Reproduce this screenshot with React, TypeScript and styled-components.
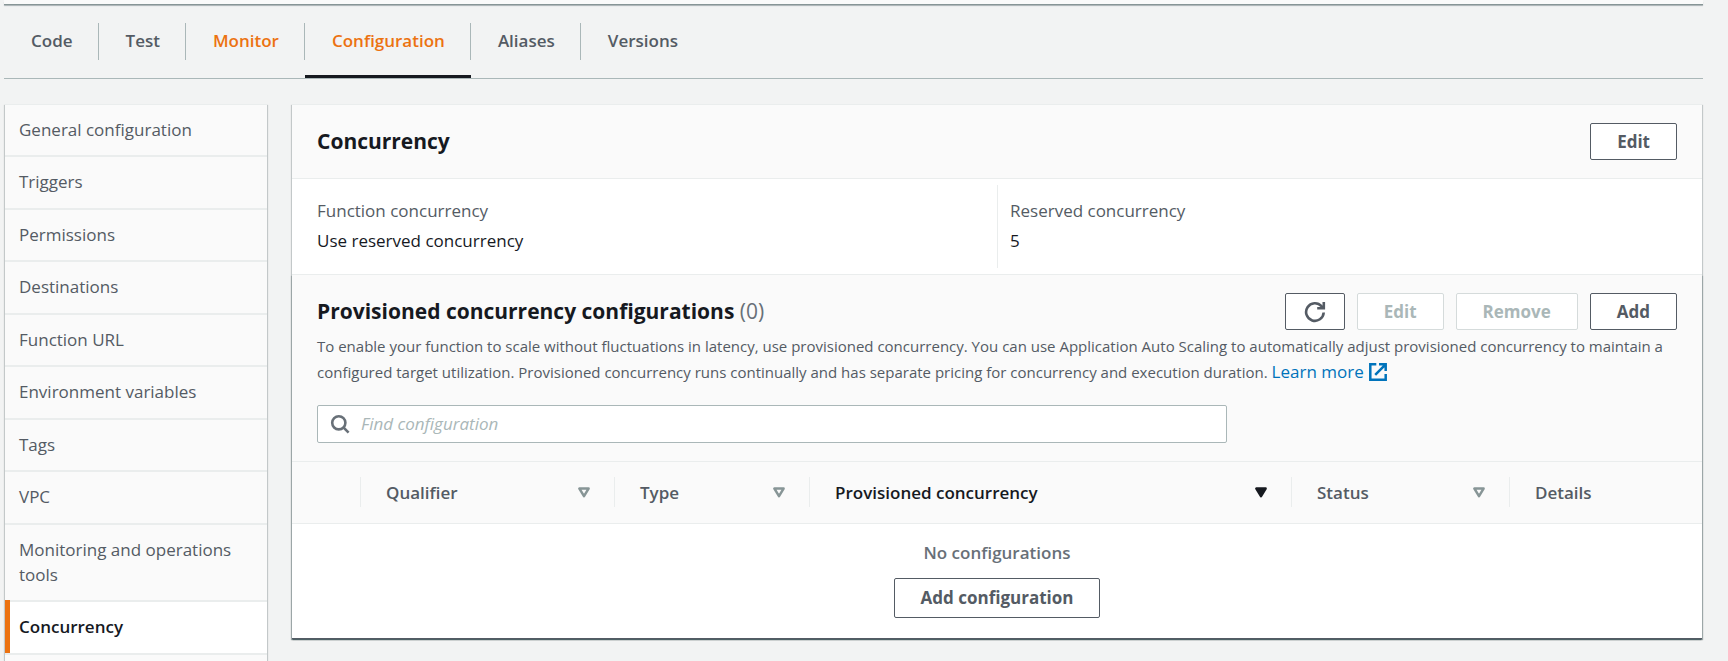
import React, { useState } from 'react';
import styled, { createGlobalStyle, css } from 'styled-components';

const color = {
  page: '#f2f3f3',
  surface: '#ffffff',
  header: '#fafafa',
  text: '#16191f',
  muted: '#545b64',
  faint: '#687078',
  line: '#eaeded',
  control: '#aab7b8',
  disabledLine: '#d5dbdb',
  accent: '#ec7211',
  link: '#0073bb',
};

const GlobalStyle = createGlobalStyle`
  *, *::before, *::after { box-sizing: border-box; }
  body {
    margin: 0;
    background: ${color.page};
    color: ${color.text};
    font: 400 17px/25px "Open Sans", "Noto Sans", sans-serif;
  }
  button, input { font: inherit; }
`;

const raised = css`
  box-shadow: 0 1px 1px 0 rgba(0, 28, 36, 0.3), 1px 1px 1px 0 rgba(0, 28, 36, 0.15),
    -1px 1px 1px 0 rgba(0, 28, 36, 0.15);
`;

const Page = styled.div`
  display: flex;
  flex-direction: column;
  min-height: 100vh;
  padding: 0 25px 0 4px;
`;

const Overview = styled.div`
  height: 4px;
  background: ${color.header};
  box-shadow: 0 1px 0 0 #879596, 0 2px 1px 0 rgba(0, 28, 36, 0.3);
  margin-bottom: 1px;
`;

const TabList = styled.ul`
  display: flex;
  height: 74px;
  margin: 0;
  padding: 0;
  list-style: none;
  border-bottom: 1px solid ${color.control};
`;

const TabItem = styled.li<{ $active?: boolean }>`
  padding-top: 18px;
  border-bottom: 3px solid ${(p) => (p.$active ? color.text : 'transparent')};

  &:not(:last-child) a {
    border-right: 1px solid ${color.control};
  }
`;

const TabLink = styled.a<{ $accent?: boolean }>`
  display: flex;
  align-items: center;
  height: 37px;
  padding: 0 25px 2px 27px;
  color: ${(p) => (p.$accent ? color.accent : color.muted)};
  font-weight: 600;
  text-decoration: none;
`;

const Content = styled.div`
  display: flex;
  flex: 1;
  gap: 25px;
  padding: 25px 1px 0;
`;

const SideNav = styled.nav`
  flex: 0 0 262px;
  border-top: 1px solid ${color.line};
  background: ${color.header};
  ${raised}

  ul {
    margin: 0;
    padding: 0;
    list-style: none;
  }
`;

const NavItem = styled.li`
  border-bottom: 2px solid ${color.line};

  &:nth-child(even) a {
    padding-bottom: 14px;
  }
`;

const NavLink = styled.a<{ $active: boolean }>`
  position: relative;
  display: block;
  padding: 12px 14px 13px;
  color: ${(p) => (p.$active ? color.text : color.muted)};
  font-weight: ${(p) => (p.$active ? 600 : 400)};
  text-decoration: none;

  ${(p) =>
    p.$active &&
    css`
      background: ${color.surface};

      &::before {
        content: '';
        position: absolute;
        inset: -2px auto 0 0;
        width: 5px;
        background: ${color.accent};
      }
    `}
`;

const Panel = styled.main`
  flex: 1;
  align-self: flex-start;
  min-width: 0;
  border-top: 1px solid ${color.line};
  background: ${color.surface};
  ${raised}
`;

const PanelHeader = styled.header`
  padding: 18px 25px;
  background: ${color.header};
  border-bottom: 1px solid ${color.line};
`;

const HeadingRow = styled.div`
  display: flex;
  align-items: center;
  justify-content: space-between;
`;

const Heading = styled.h2`
  margin: 0;
  padding-bottom: 2px;
  font-size: 21px;
  font-weight: 700;
  line-height: 30px;
`;

const Count = styled.span`
  color: ${color.faint};
  font-weight: 400;
`;

const Actions = styled.div`
  display: flex;
  gap: 12px;
`;

const Button = styled.button`
  display: inline-flex;
  align-items: center;
  justify-content: center;
  height: 37px;
  padding: 0 26px 1px;
  border: 1px solid ${color.muted};
  border-radius: 2px;
  background: ${color.surface};
  color: ${color.muted};
  font-weight: 700;

  &:disabled {
    border-color: ${color.disabledLine};
    color: ${color.control};
  }
`;

const IconButton = styled(Button)`
  padding: 0 18px;
`;

const EmptyButton = styled(Button)`
  height: 40px;
`;

const Details = styled.dl`
  display: grid;
  grid-template-columns: 1fr 1fr;
  margin: 0;
  padding: 6px 25px;
  border-bottom: 1px solid ${color.line};
`;

const Detail = styled.div`
  display: flex;
  flex-direction: column;
  gap: 5px;
  padding: 13px 0 15px;

  & + & {
    padding-left: 12px;
    border-left: 1px solid ${color.line};
  }

  dt {
    color: ${color.muted};
  }

  dd {
    margin: 0;
  }
`;

const Provisioned = styled.section`
  border-bottom: 1px solid ${color.muted};
  box-shadow: 1px 1px 1px 0 rgba(0, 28, 36, 0.2), -1px 1px 1px 0 rgba(0, 28, 36, 0.2);
`;

const Description = styled.p`
  margin: 3px 0 20px;
  color: ${color.muted};
  font-size: 15px;
  line-height: 26px;
`;

const LearnMore = styled.a`
  color: ${color.link};
  font-size: 17px;
  line-height: 25px;
  text-decoration: none;
  white-space: nowrap;

  svg {
    margin-left: 5px;
    vertical-align: -3px;
  }
`;

const SearchBox = styled.label`
  display: flex;
  align-items: center;
  gap: 11px;
  max-width: 910px;
  height: 38px;
  padding: 0 12px;
  border: 1px solid ${color.control};
  border-radius: 2px;
  background: ${color.surface};
  color: ${color.faint};
`;

const SearchInput = styled.input`
  flex: 1;
  min-width: 0;
  padding: 0 0 2px;
  border: 0;
  outline: 0;
  background: transparent;
  color: ${color.text};

  &::placeholder {
    color: ${color.control};
    font-style: italic;
    opacity: 1;
  }
`;

const Table = styled.table`
  width: 100%;
  table-layout: fixed;
  border-collapse: collapse;
`;

const HeadCell = styled.th<{ $width?: number; $sorted?: boolean }>`
  width: ${(p) => (p.$width ? `${p.$width}px` : 'auto')};
  padding: 15px 0 16px;
  background: ${color.header};
  border-bottom: 1px solid ${color.line};
  color: ${(p) => (p.$sorted ? color.text : color.muted)};
  font-weight: 600;
  text-align: left;
`;

const HeadContent = styled.div`
  display: flex;
  align-items: center;
  justify-content: space-between;
  height: 30px;
  padding: 0 24px 0 25px;
  border-left: 1px solid ${color.line};
`;

const EmptyCell = styled.td`
  padding: 16px 0 20px;
  text-align: center;
`;

const EmptyText = styled.div`
  margin-bottom: 13px;
  color: ${color.faint};
  font-weight: 600;
`;

const RefreshIcon = () => (
  <svg width="22" height="22" viewBox="0 0 22 22" fill="none" stroke="currentColor" strokeWidth="2.6" aria-hidden="true">
    <path d="M19.7 11.5a8.8 8.8 0 1 1-2.2-6.3L19.4 7" />
    <path d="M13.2 7.2h6.6V1" />
  </svg>
);

const SearchIcon = () => (
  <svg width="20" height="20" viewBox="0 0 20 20" fill="none" stroke="currentColor" strokeWidth="2.6" aria-hidden="true">
    <circle cx="8.8" cy="8.8" r="6.6" />
    <path d="M13.4 13.4 18.6 18.6" />
  </svg>
);

const ExternalIcon = () => (
  <svg width="18" height="18" viewBox="0 0 18 18" fill="none" stroke="currentColor" strokeWidth="2.5" aria-hidden="true">
    <path d="M16.7 11v5.7H1.3V1.3h6M10 1.3h6.7V8M6.2 11.8 16.4 1.6" />
  </svg>
);

const SortIcon = ({ filled }: { filled?: boolean }) => (
  <svg width="12" height="11" viewBox="0 0 12 11" aria-hidden="true">
    <path
      d="M1.4 1.6h9.2L6 9.2Z"
      fill={filled ? color.text : 'none'}
      stroke={filled ? color.text : '#879596'}
      strokeWidth="2.5"
      strokeLinejoin="round"
    />
  </svg>
);

const tabs = ['Code', 'Test', 'Monitor', 'Configuration', 'Aliases', 'Versions'];

const sections = [
  'General configuration',
  'Triggers',
  'Permissions',
  'Destinations',
  'Function URL',
  'Environment variables',
  'Tags',
  'VPC',
  'Monitoring and operations tools',
  'Concurrency',
];

const columns: { label: string; width?: number; sort?: 'idle' | 'active' }[] = [
  { label: 'Qualifier', width: 254, sort: 'idle' },
  { label: 'Type', width: 195, sort: 'idle' },
  { label: 'Provisioned concurrency', sort: 'active' },
  { label: 'Status', width: 218, sort: 'idle' },
  { label: 'Details', width: 193 },
];

export default function App() {
  const [query, setQuery] = useState('');

  return (
    <>
      <GlobalStyle />
      <Page>
        <Overview />
        <TabList>
          {tabs.map((tab) => (
            <TabItem key={tab} $active={tab === 'Configuration'}>
              <TabLink href="#" $accent={tab === 'Monitor' || tab === 'Configuration'}>
                {tab}
              </TabLink>
            </TabItem>
          ))}
        </TabList>
        <Content>
          <SideNav aria-label="Configuration sections">
            <ul>
              {sections.map((section) => (
                <NavItem key={section}>
                  <NavLink href="#" $active={section === 'Concurrency'}>
                    {section}
                  </NavLink>
                </NavItem>
              ))}
            </ul>
          </SideNav>
          <Panel>
            <PanelHeader>
              <HeadingRow>
                <Heading>Concurrency</Heading>
                <Button type="button">Edit</Button>
              </HeadingRow>
            </PanelHeader>
            <Details>
              <Detail>
                <dt>Function concurrency</dt>
                <dd>Use reserved concurrency</dd>
              </Detail>
              <Detail>
                <dt>Reserved concurrency</dt>
                <dd>5</dd>
              </Detail>
            </Details>
            <Provisioned>
              <PanelHeader>
                <HeadingRow>
                  <Heading>
                    Provisioned concurrency configurations <Count>(0)</Count>
                  </Heading>
                  <Actions>
                    <IconButton type="button" aria-label="Refresh">
                      <RefreshIcon />
                    </IconButton>
                    <Button type="button" disabled>
                      Edit
                    </Button>
                    <Button type="button" disabled>
                      Remove
                    </Button>
                    <Button type="button">Add</Button>
                  </Actions>
                </HeadingRow>
                <Description>
                  To enable your function to scale without fluctuations in latency, use provisioned concurrency. You can
                  use Application Auto Scaling to automatically adjust provisioned concurrency to maintain a configured
                  target utilization. Provisioned concurrency runs continually and has separate pricing for concurrency
                  and execution duration.{' '}
                  <LearnMore href="#">
                    Learn more
                    <ExternalIcon />
                  </LearnMore>
                </Description>
                <SearchBox>
                  <SearchIcon />
                  <SearchInput
                    type="text"
                    aria-label="Find configuration"
                    placeholder="Find configuration"
                    value={query}
                    onChange={(event) => setQuery(event.target.value)}
                  />
                </SearchBox>
              </PanelHeader>
              <Table>
                <thead>
                  <tr>
                    <HeadCell as="td" $width={68} />
                    {columns.map((column) => (
                      <HeadCell key={column.label} scope="col" $width={column.width} $sorted={column.sort === 'active'}>
                        <HeadContent>
                          {column.label}
                          {column.sort && <SortIcon filled={column.sort === 'active'} />}
                        </HeadContent>
                      </HeadCell>
                    ))}
                  </tr>
                </thead>
                <tbody>
                  <tr>
                    <EmptyCell colSpan={columns.length + 1}>
                      <EmptyText>No configurations</EmptyText>
                      <EmptyButton type="button">Add configuration</EmptyButton>
                    </EmptyCell>
                  </tr>
                </tbody>
              </Table>
            </Provisioned>
          </Panel>
        </Content>
      </Page>
    </>
  );
}
